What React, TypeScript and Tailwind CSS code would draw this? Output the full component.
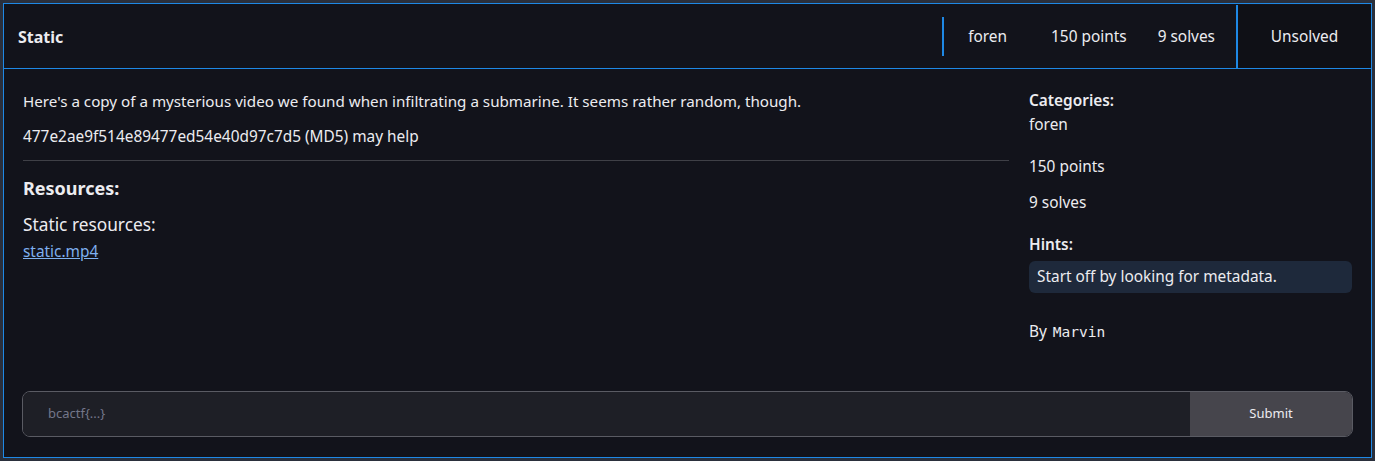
export default function App() {
  return (
    <div className="min-h-[461px] bg-[#2a2f3b] p-[3px] font-['Noto_Sans',sans-serif] text-[#ececf0]">
      <div className="flex min-h-[455px] flex-col border border-[#1e88e5] bg-[#12131b]">
        {/* Header */}
        <div className="flex h-[65px] items-stretch border-b border-[#1e88e5] pt-[1px]">
          <div className="flex flex-1 items-center pl-[14px] text-[16px] font-bold">Static</div>
          <div className="flex items-center text-[15.4px]">
            <div className="h-[39px] w-[2px] bg-[#1e88e5]" />
            <span className="ml-[24px]">foren</span>
            <span className="ml-[44px]">150 points</span>
            <span className="ml-[31px] mr-[21px]">9 solves</span>
          </div>
          <div className="flex w-[135px] items-center justify-center border-l-2 border-[#1e88e5] bg-[#0f1016] text-[15.4px]">
            Unsolved
          </div>
        </div>

        {/* Body */}
        <div className="flex flex-1 gap-[20px] px-[19px] pt-[20px]">
          <div className="flex-1">
            <p className="text-[15.2px] leading-[24px]">
              Here's a copy of a mysterious video we found when infiltrating a submarine. It seems rather random, though.
            </p>
            <p className="mt-[12px] text-[15.4px] leading-[24px]">477e2ae9f514e89477ed54e40d97c7d5 (MD5) may help</p>
            <hr className="mt-[11px] border-[#3f4047]" />
            <h3 className="mt-[14px] text-[18px] font-bold leading-[26px]">Resources:</h3>
            <p className="mt-[12px] text-[17.3px] leading-[24px]">Static resources:</p>
            <a href="#" className="block pt-[2px] text-[15.4px] leading-[26px] text-[#7fb0f0] underline">
              static.mp4
            </a>
          </div>
          <div className="w-[323px] text-[15.4px]">
            <div className="font-semibold leading-[24px]">Categories:</div>
            <div className="leading-[24px]">foren</div>
            <div className="mt-[18px] leading-[24px]">150 points</div>
            <div className="mt-[12px] leading-[24px]">9 solves</div>
            <div className="mt-[18px] font-semibold leading-[24px]">Hints:</div>
            <div className="mt-[4px] rounded-md bg-[#1e293b] px-[8px] py-[4px] leading-[24px]">
              Start off by looking for metadata.
            </div>
            <div className="mt-[27px] leading-[24px]">
              By<span className="ml-[6px] font-['DejaVu_Sans_Mono',monospace] text-[14.5px]">Marvin</span>
            </div>
          </div>
        </div>

        {/* Flag form */}
        <div className="px-[18px] pb-[20px] pt-[21px]">
          <form className="flex h-[46px] overflow-hidden rounded-lg border border-[#5a5b63]" onSubmit={(e) => e.preventDefault()}>
            <input
              placeholder="bcactf{...}"
              className="flex-1 bg-[#1e1f26] px-[25px] text-[13px] text-white outline-none placeholder:text-[#73768a]"
            />
            <button type="submit" className="w-[162px] bg-[#46454c] text-[13px] text-[#ececf0]">
              Submit
            </button>
          </form>
        </div>
      </div>
    </div>
  );
}
